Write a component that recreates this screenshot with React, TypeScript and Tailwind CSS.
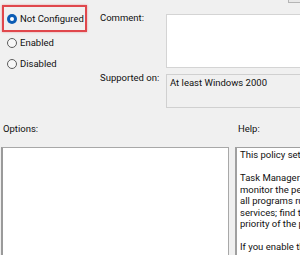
import React from "react";

function Radio({ checked }: { checked?: boolean }) {
  return checked ? (
    <span className="w-[10px] h-[10px] rounded-full bg-[#0b5cb5] flex items-center justify-center shrink-0">
      <span className="w-[4px] h-[4px] rounded-full bg-white" />
    </span>
  ) : (
    <span className="w-[10px] h-[10px] rounded-full border border-[#5c5c5c] bg-[#f7f7f7] shrink-0" />
  );
}

const helpLines = [
  "This policy setting prevents users from starting Task Manager (Taskmgr.exe).",
  "",
  "Task Manager (Taskmgr.exe) lets users start and stop programs;",
  "monitor the performance of their computers; view and monitor",
  "all programs running on their computers, including system",
  "services; find the executable names of programs; and change the",
  "priority of the process in which programs run.",
  "",
  "If you enable this setting, users will not be able to access",
  "Task Manager. If users try to start Task Manager, a message appears",
];

export default function App() {
  return (
    <div className="w-[300px] h-[255px] overflow-hidden bg-[#f0f0f0] text-[#111] text-[9.5px] leading-[11.5px] font-['Roboto',sans-serif] flex flex-col">
      <div className="h-[110px] flex shrink-0">
        <div className="w-[97px] pt-[5px] pl-[2px] flex flex-col">
          <div className="w-[85px] h-[27px] border-2 border-[#e0474c] shadow-[0_0_2px_rgba(224,71,76,0.5)] flex items-center pl-[3px] gap-[3px]">
            <Radio checked />
            <span>Not Configured</span>
          </div>
          <div className="mt-[4px] h-[14px] pl-[5px] flex items-center gap-[3px]">
            <Radio />
            <span>Enabled</span>
          </div>
          <div className="mt-[7px] h-[14px] pl-[5px] flex items-center gap-[3px]">
            <Radio />
            <span>Disabled</span>
          </div>
        </div>
        <div className="flex-1 flex flex-col">
          <div className="h-[3px] flex justify-end">
            <div className="w-[12px] h-[3px] border-l border-b border-[#b5b5b5] bg-[#e8e8e8]" />
          </div>
          <div className="mt-[9px] flex items-start">
            <div className="w-[69px] pl-[3px]">Comment:</div>
            <div className="flex-1 mt-[2px] h-[54px] bg-white border border-[#d4d4d4] border-r-0" />
          </div>
          <div className="mt-[4px] flex items-start">
            <div className="w-[69px] pl-[3px]">Supported on:</div>
            <div className="flex-1 mt-[2px] h-[34px] bg-[#f0f0f0] border border-[#d0d0d0] border-r-0 px-[3px] pt-[2px]">
              At least Windows 2000
            </div>
          </div>
        </div>
      </div>
      <div className="h-[37px] flex items-center shrink-0 pt-[1px]">
        <div className="w-[238px] pl-[3px]">Options:</div>
        <div>Help:</div>
      </div>
      <div className="flex gap-[6px] pl-[1px]">
        <div className="w-[228px] h-[130px] bg-white border border-[#a8a8a8] border-l-2 border-l-[#9a9a9a] shrink-0" />
        <div className="flex-1 h-[130px] bg-white border border-[#a0a0a0] border-l-2 border-r-0 overflow-hidden pl-[3px] pt-[1px]">
          {helpLines.map((l, i) => (
            <div key={i} className="whitespace-nowrap h-[11.5px]">
              {l}
            </div>
          ))}
        </div>
      </div>
    </div>
  );
}
